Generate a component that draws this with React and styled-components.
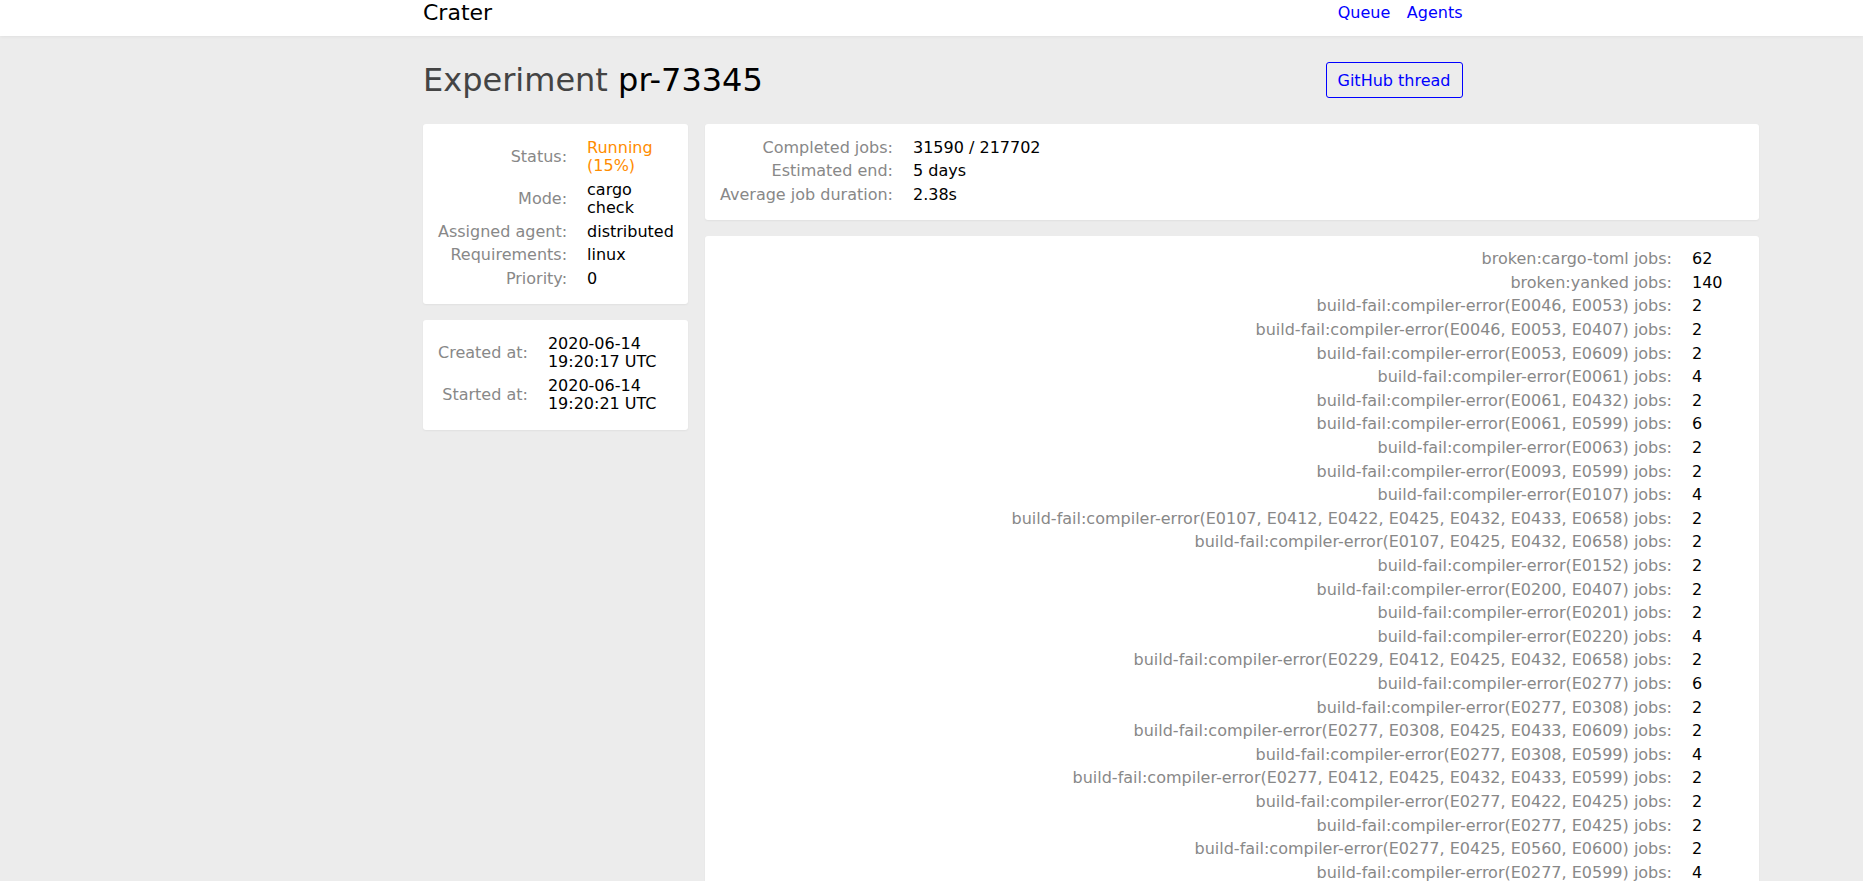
import React from "react";
import styled, { createGlobalStyle } from "styled-components";

const GlobalStyle = createGlobalStyle`
  html, body {
    margin: 0;
    padding: 0;
    background: #ececec;
    font-family: "DejaVu Sans", Verdana, sans-serif;
    font-size: 16px;
    color: #000;
  }
  a {
    color: #0000ee;
    text-decoration: none;
  }
`;

const Header = styled.header`
  background: #fff;
  height: 36px;
  box-shadow: 0 0 4px rgba(0, 0, 0, 0.08);
`;

const Container = styled.div`
  width: 1040px;
  margin-left: calc(50% - 508.5px);
`;

const HeaderInner = styled(Container)`
  display: flex;
  justify-content: space-between;
  align-items: flex-start;
`;

const Brand = styled.a`
  font-size: 22px;
  color: #000 !important;
`;

const Nav = styled.nav`
  display: flex;
  gap: 16.5px;
  padding-top: 3px;
  padding-right: 0.5px;
`;

const NavLink = styled.a`
  font-size: 16px;
  color: #0000ff;
`;

const Main = styled(Container)`
  padding-top: 25px;
`;

const TitleRow = styled.div`
  display: flex;
  justify-content: space-between;
  align-items: center;
  margin-bottom: 25px;
`;

const Title = styled.h1`
  margin: 0;
  font-size: 32px;
  font-weight: normal;
  color: #444;
`;

const TitleName = styled.span`
  color: #000;
`;

const ThreadButton = styled.a`
  display: inline-block;
  border: 1px solid #0000ff;
  border-radius: 3px;
  padding: 7.7px 11px;
  color: #0000ff;
  font-size: 16px;
  margin-right: 0.5px;
`;

const Columns = styled.div`
  display: flex;
  gap: 17px;
  align-items: flex-start;
`;

const Column = styled.div`
  display: flex;
  flex-direction: column;
  gap: 16px;
  flex: none;
  width: ${(p) => p.$width}px;
`;

const Card = styled.div`
  background: #fff;
  border-radius: 3px;
  padding: 12px 15px 13px 15px;
  box-shadow: 0 1px 2px rgba(0, 0, 0, 0.05);
`;

const InfoGrid = styled.div`
  display: grid;
  grid-template-columns: ${(p) =>
    p.$valueWidth ? `1fr ${p.$valueWidth}px` : "auto auto"};
  justify-content: start;
  align-items: center;
  line-height: 18.6px;
`;

const Label = styled.div`
  text-align: right;
  color: #888;
  white-space: nowrap;
  padding: 2.5px 20px 2.5px 0;
`;

const Value = styled.div`
  padding: 2.5px 0;
  color: ${(p) => p.$color || "#000"};
  min-width: 0;
`;

const Info = ({ rows, valueWidth }) => (
  <InfoGrid $valueWidth={valueWidth}>
    {rows.map(([label, value, color]) => (
      <React.Fragment key={label}>
        <Label>{label}</Label>
        <Value $color={color}>{value}</Value>
      </React.Fragment>
    ))}
  </InfoGrid>
);

const errors = [
  ["E0046, E0053", 2],
  ["E0046, E0053, E0407", 2],
  ["E0053, E0609", 2],
  ["E0061", 4],
  ["E0061, E0432", 2],
  ["E0061, E0599", 6],
  ["E0063", 2],
  ["E0093, E0599", 2],
  ["E0107", 4],
  ["E0107, E0412, E0422, E0425, E0432, E0433, E0658", 2],
  ["E0107, E0425, E0432, E0658", 2],
  ["E0152", 2],
  ["E0200, E0407", 2],
  ["E0201", 2],
  ["E0220", 4],
  ["E0229, E0412, E0425, E0432, E0658", 2],
  ["E0277", 6],
  ["E0277, E0308", 2],
  ["E0277, E0308, E0425, E0433, E0609", 2],
  ["E0277, E0308, E0599", 4],
  ["E0277, E0412, E0425, E0432, E0433, E0599", 2],
  ["E0277, E0422, E0425", 2],
  ["E0277, E0425", 2],
  ["E0277, E0425, E0560, E0600", 2],
  ["E0277, E0599", 4],
  ["E0282", 2],
  ["E0308", 14],
  ["E0308, E0425", 2],
];

const resultRows = [
  ["broken:cargo-toml jobs:", "62"],
  ["broken:yanked jobs:", "140"],
  ...errors.map(([codes, n]) => [
    `build-fail:compiler-error(${codes}) jobs:`,
    String(n),
  ]),
];

export default function App() {
  return (
    <>
      <GlobalStyle />
      <Header>
        <HeaderInner>
          <Brand href="#">Crater</Brand>
          <Nav>
            <NavLink href="#">Queue</NavLink>
            <NavLink href="#">Agents</NavLink>
          </Nav>
        </HeaderInner>
      </Header>
      <Main>
        <TitleRow>
          <Title>
            Experiment <TitleName>pr-73345</TitleName>
          </Title>
          <ThreadButton href="#">GitHub thread</ThreadButton>
        </TitleRow>
        <Columns>
          <Column $width={265}>
            <Card>
              <Info
                rows={[
                  ["Status:", "Running (15%)", "#ff8c00"],
                  ["Mode:", "cargo check"],
                  ["Assigned agent:", "distributed"],
                  ["Requirements:", "linux"],
                  ["Priority:", "0"],
                ]}
              />
            </Card>
            <Card>
              <Info
                rows={[
                  ["Created at:", "2020-06-14 19:20:17 UTC"],
                  ["Started at:", "2020-06-14 19:20:21 UTC"],
                ]}
              />
            </Card>
          </Column>
          <Column $width={1054}>
            <Card>
              <Info
                rows={[
                  ["Completed jobs:", "31590 / 217702"],
                  ["Estimated end:", "5 days"],
                  ["Average job duration:", "2.38s"],
                ]}
              />
            </Card>
            <Card>
              <Info valueWidth={52} rows={resultRows} />
            </Card>
          </Column>
        </Columns>
      </Main>
    </>
  );
}
